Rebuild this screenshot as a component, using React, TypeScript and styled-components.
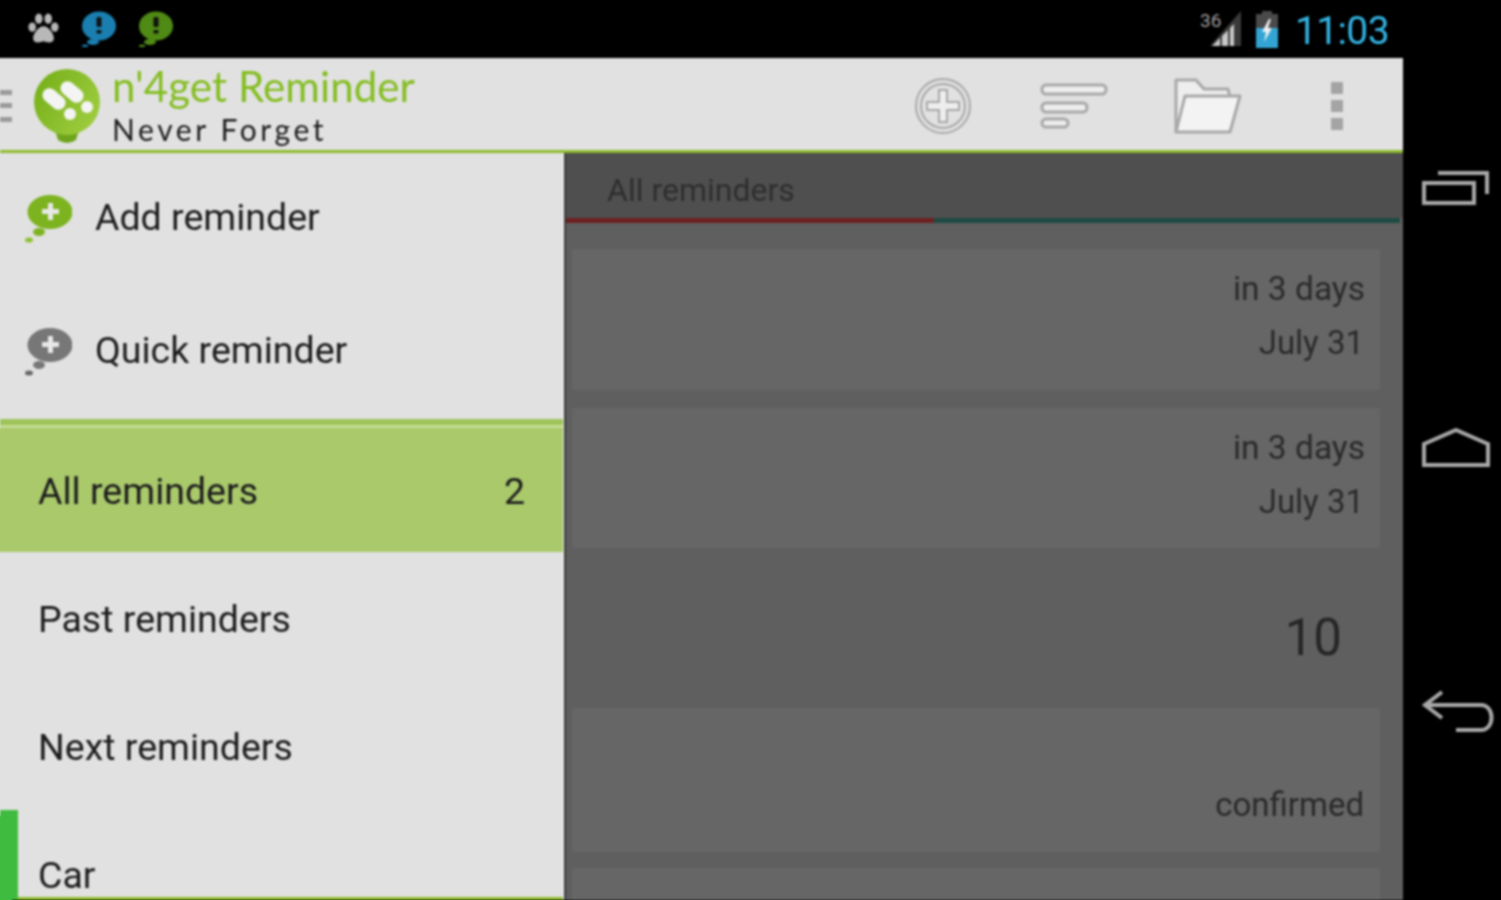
import styled, { createGlobalStyle } from "styled-components";

const GlobalStyle = createGlobalStyle`
  html, body {
    margin: 0;
    padding: 0;
    background: #000;
    overflow: hidden;
  }
  body {
    font-family: Roboto, "Liberation Sans", sans-serif;
  }`;

const Frame = styled.div`
  width: 1501px;
  height: 900px;
  overflow: hidden;`;

// The whole reference is a soft upscaled capture, hence the blur
const Device = styled.div`
  width: 1501px;
  height: 900px;
  display: flex;
  background: #000;
  filter: blur(0.9px);`;

const Screen = styled.div`
  width: 1403px;
  height: 900px;
  display: flex;
  flex-direction: column;`;

const StatusBar = styled.div`
  height: 58px;
  flex: none;
  display: flex;
  align-items: center;
  padding: 0 14px 0 27px;`;

const Notifications = styled.div`
  display: flex;
  align-items: center;
  gap: 21px;
  flex: 1;`;

const SignalBlock = styled.div`
  display: flex;
  align-items: center;
  gap: 11px;
  margin-right: 16px;`;

const Clock = styled.span`
  color: #33b5e5;
  font-size: 39px;
  font-weight: 400;
  letter-spacing: -0.6px;
  line-height: 58px;
  padding-top: 4px;`;

const ActionBar = styled.div`
  height: 92px;
  flex: none;
  display: flex;
  align-items: center;
  background: #e1e1e1;
  border-bottom: 3px solid #8dbb2c;
  box-shadow: -6px 0 0 #e1e1e1;`;

const Brand = styled.div`
  display: flex;
  align-items: center;
  flex: 1;
  padding-top: 3px;`;

const DrawerHint = styled.div`
  width: 12px;
  height: 32px;
  margin-right: 21px;
  display: flex;
  flex-direction: column;
  justify-content: space-between;
  & > i {
    height: 5px;
    background: #9a9a9a;
  }`;

const BrandText = styled.div`
  margin: -2px 0 0 11px;
  display: flex;
  flex-direction: column;`;

const BrandTitle = styled.span`
  color: #84bd22;
  font-family: Lato, sans-serif;
  font-weight: 400;
  font-size: 42px;
  line-height: 46px;
  letter-spacing: 0.1px;`;

const BrandSlogan = styled.span`
  color: #1c1c1c;
  font-family: Lato, sans-serif;
  font-weight: 400;
  font-size: 30px;
  line-height: 36px;
  margin-top: 2px;
  letter-spacing: 3.6px;`;

const ActionIcons = styled.div`
  display: flex;
  align-items: center;
  margin-right: 1px;
  padding-top: 4px;`;

const ActionButton = styled.div<{ $width: number }>`
  width: ${(p) => p.$width}px;
  display: flex;
  justify-content: center;`;

const Body = styled.div`
  flex: 1;
  display: flex;
  min-height: 0;`;

const Drawer = styled.div`
  width: 563px;
  flex: none;
  background: #e1e1e1;
  border-right: 1px solid #f4f4f4;
  box-shadow: -6px 0 0 #e1e1e1;
  display: flex;
  flex-direction: column;
  position: relative;`;

const ActionRow = styled.div`
  height: 133px;
  flex: none;
  display: flex;
  align-items: center;
  padding-left: 24px;
  gap: 23px;
  color: #1c1c1c;
  font-size: 37.5px;`;

const ActionLabel = styled.span`
  margin-top: -6px;`;

const Divider = styled.div`
  height: 10px;
  flex: none;
  background: linear-gradient(#9fc45a 0 6px, #c4dc93 6px 9px, #a9c96b 9px);`;

const FilterRow = styled.div<{ $active?: boolean; $height: number }>`
  height: ${(p) => p.$height}px;
  flex: none;
  display: flex;
  align-items: center;
  justify-content: space-between;
  padding: 0 38px;
  font-size: 37.5px;
  color: #1c1c1c;
  background: ${(p) => (p.$active ? "#a9c96b" : "transparent")};
  box-shadow: ${(p) => (p.$active ? "-6px 0 0 #a9c96b" : "none")};`;

const CategoryMark = styled.div`
  position: absolute;
  left: 0;
  bottom: 0;
  width: 18px;
  height: 90px;
  background: #3fbb3f;
  box-shadow: -6px 6px 0 #3fbb3f;`;

const DrawerBottom = styled.div`
  position: absolute;
  left: 18px;
  right: 0;
  bottom: 0;
  height: 3px;
  background: #8dbb2c;
  box-shadow: 0 6px 0 #8dbb2c;`;

const ListPane = styled.div`
  flex: 1;
  background: #5f5f5f;
  border-left: 2px solid #3a3a3a;
  display: flex;
  flex-direction: column;
  overflow: hidden;`;

const TabBar = styled.div`
  height: 65px;
  flex: none;
  box-sizing: border-box;
  background: #4f4f4f;
  display: flex;
  align-items: center;
  padding: 8px 0 0 41px;
  color: #2e2e2e;
  font-size: 32px;`;

const TabLine = styled.div`
  height: 5px;
  flex: none;
  display: flex;
  margin-right: 3px;
  background: #1f4a44;
  & > i {
    width: 368px;
    background: #6e1f1f;
  }`;

const Rows = styled.div`
  padding: 26px 23px 0 6px;
  display: flex;
  flex-direction: column;`;

const Card = styled.div<{ $height: number; $gap: number; $top: number }>`
  height: ${(p) => p.$height}px;
  margin-bottom: ${(p) => p.$gap}px;
  flex: none;
  background: #666;
  border-bottom: 2px solid #5f5f5f;
  box-sizing: border-box;
  display: flex;
  flex-direction: column;
  align-items: flex-end;
  padding: ${(p) => p.$top}px 15px 0 0;
  color: #2a2a2a;
  font-size: 33.5px;`;

const CardLine = styled.span`
  line-height: 54px;
  &:nth-child(2) {
    padding-right: 1px;
    font-size: 33px;
  }`;

const SectionHeader = styled.div`
  height: 160px;
  flex: none;
  box-sizing: border-box;
  margin-top: -16px;
  margin-bottom: -2px;
  display: flex;
  align-items: center;
  justify-content: flex-end;
  padding: 14px 38px 0 0;
  font-size: 51px;
  font-weight: 400;
  color: #262626;`;

const SoftKeys = styled.div`
  flex: 1;
  display: flex;
  flex-direction: column;
  align-items: center;
  padding: 170px 0 0 8px;`;

const SoftKey = styled.div<{ $height: number; $shift?: number }>`
  height: ${(p) => p.$height}px;
  margin-left: ${(p) => p.$shift ?? 0}px;
  display: flex;
  align-items: flex-start;`;

function Paw() {
  return (
    <svg width="33" height="32" viewBox="0 0 34 34" fill="#b8b8b8">
      <ellipse cx="5" cy="15" rx="4" ry="5" />
      <ellipse cx="12" cy="6" rx="4" ry="5.5" />
      <ellipse cx="22" cy="6" rx="4" ry="5.5" />
      <ellipse cx="29" cy="15" rx="4" ry="5" />
      <path d="M17 14c-5 0-11 7-11 13 0 5 6 5 11 3 5 2 11 2 11-3 0-6-6-13-11-13z" />
    </svg>
  );
}

function AlertBubble(props: { readonly color: string }) {
  return (
    <svg width="36" height="36" viewBox="0 0 36 36">
      <ellipse cx="18" cy="15" rx="17" ry="14.5" fill={props.color} />
      <ellipse cx="12" cy="31" rx="6" ry="3" fill={props.color} />
      <ellipse cx="4" cy="35" rx="3" ry="1.5" fill={props.color} />
      <rect x="15.5" y="6" width="5" height="10" rx="1.5" fill="#111" />
      <rect x="15.5" y="19" width="5" height="3.5" rx="1" fill="#111" />
    </svg>
  );
}

function Signal() {
  return (
    <svg width="44" height="44" viewBox="0 -4 44 44">
      <text x="0" y="16" fontSize="19" fontFamily="Roboto, sans-serif" fill="#9c9c9c">36</text>
      <path d="M41 0v35H10z" fill="#3a3a3a" />
      <path d="M12 35l8-8v8zM22 35V25l6-6v16zM30 35V17l4-4v22z" fill="#c8c8c8" />
    </svg>
  );
}

function Battery() {
  return (
    <svg width="24" height="37" viewBox="0 0 24 37">
      <rect x="7" y="0" width="10" height="4" fill="#4a4a4a" />
      <rect x="1" y="3" width="22" height="34" fill="#4a4a4a" />
      <rect x="1" y="17" width="22" height="20" fill="#33a5d5" />
      <path d="M14 8l-7 13h4l-2 10 8-14h-4l3-9z" fill="#f0f0f0" />
    </svg>
  );
}

function Logo() {
  return (
    <svg width="68" height="76" viewBox="0 0 68 76">
      <defs>
        <linearGradient id="logo-fill" x1="0" y1="0" x2="1" y2="0.6">
          <stop offset="0" stopColor="#72ad17" />
          <stop offset="1" stopColor="#9ccb3c" />
        </linearGradient>
      </defs>
      <path d="M22 62h24l-3 10q-9 6-18 0z" fill="#6fa51c" />
      <circle cx="34" cy="34" r="33" fill="url(#logo-fill)" />
      <rect x="8" y="24" width="26" height="14" rx="7" transform="rotate(40 21 31)" fill="#f4f4f4" />
      <rect x="26" y="17" width="26" height="14" rx="7" transform="rotate(40 39 24)" fill="#f4f4f4" />
      <circle cx="37" cy="46" r="6" fill="#f4f4f4" />
      <circle cx="54" cy="39" r="6" fill="#f4f4f4" />
    </svg>
  );
}

function AddCircle() {
  return (
    <svg width="58" height="58" viewBox="0 0 58 58" fill="none" stroke="#a8a8a8" strokeWidth="2">
      <circle cx="29" cy="29" r="27" />
      <circle cx="29" cy="29" r="22" />
      <path d="M25 13h8v12h12v8H33v12h-8V33H13v-8h12z" fill="#eee" />
    </svg>
  );
}

function SortBars() {
  return (
    <svg width="68" height="46" viewBox="0 0 68 46" fill="#eee" stroke="#a8a8a8" strokeWidth="3">
      <rect x="2" y="2" width="64" height="9" rx="4" />
      <rect x="2" y="20" width="45" height="9" rx="4" />
      <rect x="2" y="36" width="26" height="8" rx="4" />
    </svg>
  );
}

function Folder() {
  return (
    <svg width="72" height="56" viewBox="-4 0 72 56" fill="#eee" stroke="#a8a8a8" strokeWidth="3" strokeLinejoin="round">
      <path d="M2 54V2h20l8 9h24l2 8" />
      <path d="M2 54l9-36h55l-10 36z" fill="#f3f3f3" />
    </svg>
  );
}

function Overflow() {
  return (
    <svg width="12" height="48" viewBox="0 0 12 48" fill="#a4a4a4">
      <rect width="12" height="12" />
      <rect y="18" width="12" height="12" />
      <rect y="36" width="12" height="12" />
    </svg>
  );
}

function Bubble(props: { readonly color: string; readonly dark: string }) {
  return (
    <svg width="48" height="50" viewBox="0 0 48 50">
      <ellipse cx="26" cy="17" rx="22.5" ry="17" fill={props.color} />
      <ellipse cx="15" cy="37" rx="6" ry="4" fill={props.color} />
      <ellipse cx="5" cy="45" rx="4" ry="2.5" fill={props.dark} />
      <path d="M24 8h5v6h6v5h-6v6h-5v-6h-6v-5h6z" fill="#e8e8e8" />
    </svg>
  );
}

function RecentKey() {
  return (
    <svg width="68" height="36" viewBox="0 0 68 36" fill="none" stroke="#a8a8a8" strokeWidth="4">
      <rect x="2" y="13" width="50" height="20" />
      <path d="M16 3h49v21" />
    </svg>
  );
}

function HomeKey() {
  return (
    <svg width="68" height="40" viewBox="0 0 68 40" fill="none" stroke="#a8a8a8" strokeWidth="4">
      <path d="M2 37V16L34 2l32 14v21z" />
    </svg>
  );
}

function BackKey() {
  return (
    <svg width="74" height="44" viewBox="0 0 74 44" fill="none" stroke="#a8a8a8" strokeWidth="4">
      <path d="M20 2L3 15l17 13" />
      <path d="M3 15h56c14 0 14 25 0 25H34" />
    </svg>
  );
}

function ReminderCard(props: { readonly height: number }) {
  return (
    <Card $height={props.height} $gap={16} $top={13}>
      <CardLine>in 3 days</CardLine>
      <CardLine>July 31</CardLine>
    </Card>
  );
}

export default function App() {
  return (
    <Frame>
      <GlobalStyle />
      <Device>
        <Screen>
          <StatusBar>
            <Notifications>
              <Paw />
              <AlertBubble color="#1a7fb0" />
              <AlertBubble color="#4f8a14" />
            </Notifications>
            <SignalBlock>
              <Signal />
              <Battery />
            </SignalBlock>
            <Clock>11:03</Clock>
          </StatusBar>
          <ActionBar>
            <Brand>
              <DrawerHint><i /><i /><i /></DrawerHint>
              <Logo />
              <BrandText>
                <BrandTitle>n'4get Reminder</BrandTitle>
                <BrandSlogan>Never Forget</BrandSlogan>
              </BrandText>
            </Brand>
            <ActionIcons>
              <ActionButton $width={130}><AddCircle /></ActionButton>
              <ActionButton $width={132}><SortBars /></ActionButton>
              <ActionButton $width={132}><Folder /></ActionButton>
              <ActionButton $width={130}><Overflow /></ActionButton>
            </ActionIcons>
          </ActionBar>
          <Body>
            <Drawer>
              <ActionRow>
                <Bubble color="#7cb31f" dark="#8cc12d" />
                <ActionLabel>Add reminder</ActionLabel>
              </ActionRow>
              <ActionRow>
                <Bubble color="#777" dark="#666" />
                <ActionLabel>Quick reminder</ActionLabel>
              </ActionRow>
              <Divider />
              <FilterRow $active $height={123}>
                <span>All reminders</span>
                <span>2</span>
              </FilterRow>
              <FilterRow $height={134}>Past reminders</FilterRow>
              <FilterRow $height={122}>Next reminders</FilterRow>
              <FilterRow $height={134}>Car</FilterRow>
              <CategoryMark />
              <DrawerBottom />
            </Drawer>
            <ListPane>
              <TabBar>All reminders</TabBar>
              <TabLine><i /></TabLine>
              <Rows>
                <ReminderCard height={143} />
                <ReminderCard height={142} />
                <SectionHeader>10</SectionHeader>
                <Card $height={146} $gap={14} $top={16}>
                  <CardLine>&nbsp;</CardLine>
                  <CardLine>confirmed</CardLine>
                </Card>
                <Card $height={60} $gap={0} $top={0} />
              </Rows>
            </ListPane>
          </Body>
        </Screen>
        <SoftKeys>
          <SoftKey $height={258}><RecentKey /></SoftKey>
          <SoftKey $height={262}><HomeKey /></SoftKey>
          <SoftKey $height={50} $shift={5}><BackKey /></SoftKey>
        </SoftKeys>
      </Device>
    </Frame>
  );
}
